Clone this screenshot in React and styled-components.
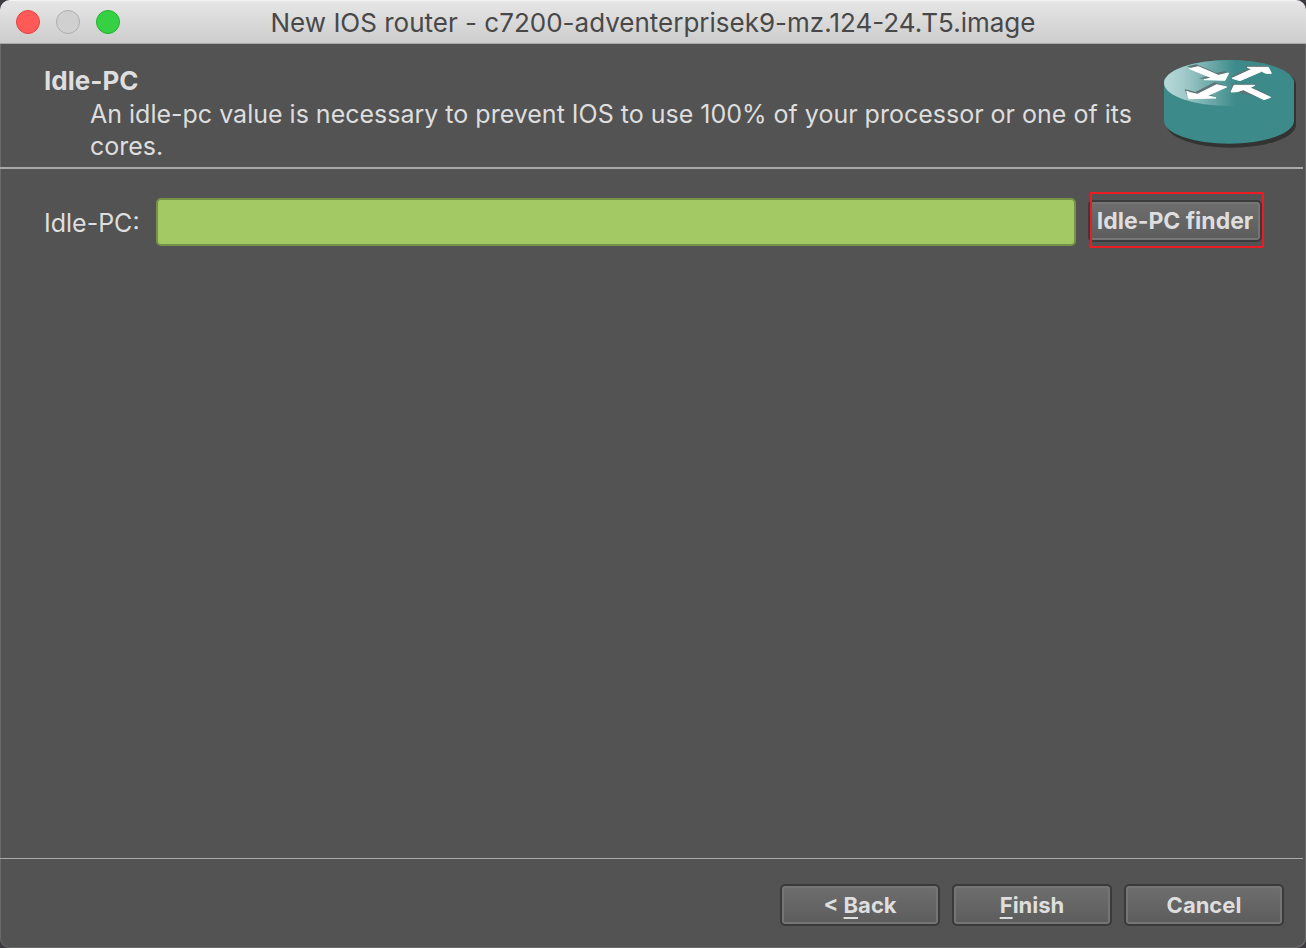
import React from 'react'
import styled, { createGlobalStyle } from 'styled-components'

function RouterIcon() {
    return (
        <RouterSvg viewBox="36 36 408 276" aria-hidden="true">
            <defs>
                <linearGradient id="routerTop" x1="0" y1="0" x2="1" y2="0">
                    <stop offset="0" stopColor="#b9d8d8" />
                    <stop offset="0.15" stopColor="#a3cbcb" />
                    <stop offset="0.55" stopColor="#3c8b8a" />
                    <stop offset="1" stopColor="#3c8b8a" />
                </linearGradient>
            </defs>
            <path fill="#333333" d="M50 116 A194 69 0 0 1 438 116 V236 A194 69 0 0 1 50 236 Z" />
            <path fill="#3c8b8a" d="M42 111 A195 69 0 0 1 432 111 V224 A195 69 0 0 1 42 224 Z" />
            <ellipse cx="237" cy="111" rx="195" ry="69" fill="url(#routerTop)" />
            <g fill="#5f7474" transform="translate(-6 -6)">
                <path d="M118 67 145 61 205 87 233 81 225 103 152 104 180 95Z" />
                <path d="M200 115 228 123 172 148 198 155 118 157 110 136 122 138 142 144Z" />
                <path d="M248 98 305 72 283 65 355 65 364 82 335 76 270 103Z" />
                <path d="M246 140 254 119 336 119 300 124 362 153 342 160Z" />
            </g>
            <g fill="#ffffff" stroke="#ffffff" strokeWidth="3" strokeLinejoin="round">
                <path d="M118 68 145 62 205 88 236 81 225 103 162 101 186 96Z" />
                <path d="M200 116 230 123 172 149 198 156 116 158 110 136 122 140 142 145Z" />
                <path d="M246 97 305 70 292 64 355 64 364 82 348 82 335 76 270 104Z" />
                <path d="M243 138 252 118 314 118 300 125 362 154 342 161 280 131 262 137Z" />
            </g>
        </RouterSvg>
    )
}

function App() {
    return (
        <>
            <GlobalStyle />
            <Window>
                <TitleBar>
                    <Lights>
                        <Light type="button" aria-label="Close" $fill="#ff5a57" $edge="#e2443f" />
                        <Light type="button" aria-label="Minimize" $fill="#d0d0d0" $edge="#adadad" />
                        <Light type="button" aria-label="Zoom" $fill="#36d044" $edge="#24b02c" />
                    </Lights>
                    <WindowTitle>New IOS router - c7200-adventerprisek9-mz.124-24.T5.image</WindowTitle>
                </TitleBar>

                <Header>
                    <HeaderText>
                        <PageTitle>Idle-PC</PageTitle>
                        <Description>
                            An idle-pc value is necessary to prevent IOS to use 100% of your processor or one of its cores.
                        </Description>
                    </HeaderText>
                    <RouterIcon />
                </Header>

                <Content>
                    <Label htmlFor="idlepc">Idle-PC:</Label>
                    <Input id="idlepc" type="text" />
                    <Highlight>
                        <FinderButton type="button">Idle-PC finder</FinderButton>
                    </Highlight>
                </Content>

                <Footer>
                    <Button type="button">&lt;&nbsp;<Mnemonic>B</Mnemonic>ack</Button>
                    <Button type="button"><Mnemonic>F</Mnemonic>inish</Button>
                    <Button type="button">Cancel</Button>
                </Footer>
            </Window>
        </>
    )
}

export default App

const GlobalStyle = createGlobalStyle`
    * {
        box-sizing: border-box;
    }

    body {
        margin: 0;
        background: #3d3b40;
        font-family: Inter, "Liberation Sans", sans-serif;
    }
`

const Window = styled.div`
    display: flex;
    flex-direction: column;
    min-height: 100vh;
    overflow: hidden;
    border-radius: 10px;
    background: #535353;
    color: #dedede;
    font-size: 25px;
    box-shadow: inset 1px 0 #6a6a6a, inset -1px -1px #6a6a6a;
`

const TitleBar = styled.div`
    display: grid;
    grid-template-columns: 1fr auto 1fr;
    align-items: center;
    height: 44px;
    padding: 0 16px;
    background: linear-gradient(#e6e6e6, #cdcdcd);
    border-top: 1px solid #f4f4f4;
    border-bottom: 1px solid #a8a8a8;
`

const Lights = styled.div`
    display: flex;
    gap: 16px;
`

const Light = styled.button`
    width: 24px;
    height: 24px;
    padding: 0;
    border: 1px solid ${props => props.$edge};
    border-radius: 50%;
    background: ${props => props.$fill};
`

const WindowTitle = styled.span`
    color: #484848;
    font-size: 26px;
    white-space: nowrap;
`

const Header = styled.header`
    display: flex;
    justify-content: space-between;
    height: 125px;
    margin-right: 3px;
    padding: 14px 5px 0 44px;
    border-bottom: 2px solid #a9a9a9;
`

const HeaderText = styled.div`
    flex: 1;
    padding-top: 6px;
`

const PageTitle = styled.h1`
    margin: 0;
    font-size: 26px;
    line-height: 34px;
    font-weight: 700;
`

const Description = styled.p`
    margin: 0;
    padding-left: 46px;
    line-height: 32px;
`

const RouterSvg = styled.svg`
    flex: none;
    width: 136px;
    height: 92px;
`

const Content = styled.main`
    display: flex;
    flex: 1;
    align-items: flex-start;
    padding: 23px 42px 0 44px;
`

const Label = styled.label`
    flex: none;
    width: 112px;
    line-height: 62px;
`

const Input = styled.input`
    flex: 1;
    min-width: 0;
    height: 48px;
    margin: 6px 12px 0 0;
    padding: 0 8px;
    border: 2px solid #76934a;
    border-radius: 5px;
    background: #a3c965;
    color: #222222;
    font: inherit;
    outline: none;
`

/* the red frame is drawn over the button's left edge */
const Highlight = styled.div`
    position: relative;
    flex: none;
    width: 176px;
    height: 56px;
    padding: 8px 2px 0 0;

    &::after {
        content: "";
        position: absolute;
        inset: 0 0 0 2px;
        border: 2px solid #ec1c24;
        pointer-events: none;
    }
`

const Button = styled.button`
    width: 160px;
    height: 42px;
    padding: 0;
    border: 2px solid #3a3a3a;
    border-radius: 5px;
    background: linear-gradient(#6e6e6e, #5c5c5c);
    box-shadow: inset 0 0 0 2px #757575;
    color: #dedede;
    font-family: inherit;
    font-size: 22px;
    font-weight: 700;
    white-space: nowrap;
`

const FinderButton = styled(Button)`
    display: block;
    width: 100%;
    font-size: 23px;
`

const Mnemonic = styled.span`
    text-decoration: underline;
    text-decoration-thickness: 2px;
    text-underline-offset: 4px;
    text-decoration-skip-ink: none;
`

const Footer = styled.footer`
    display: flex;
    justify-content: flex-end;
    gap: 12px;
    height: 90px;
    margin-right: 3px;
    padding: 25px 19px 0 0;
    border-top: 1px solid #a9a9a9;
`
